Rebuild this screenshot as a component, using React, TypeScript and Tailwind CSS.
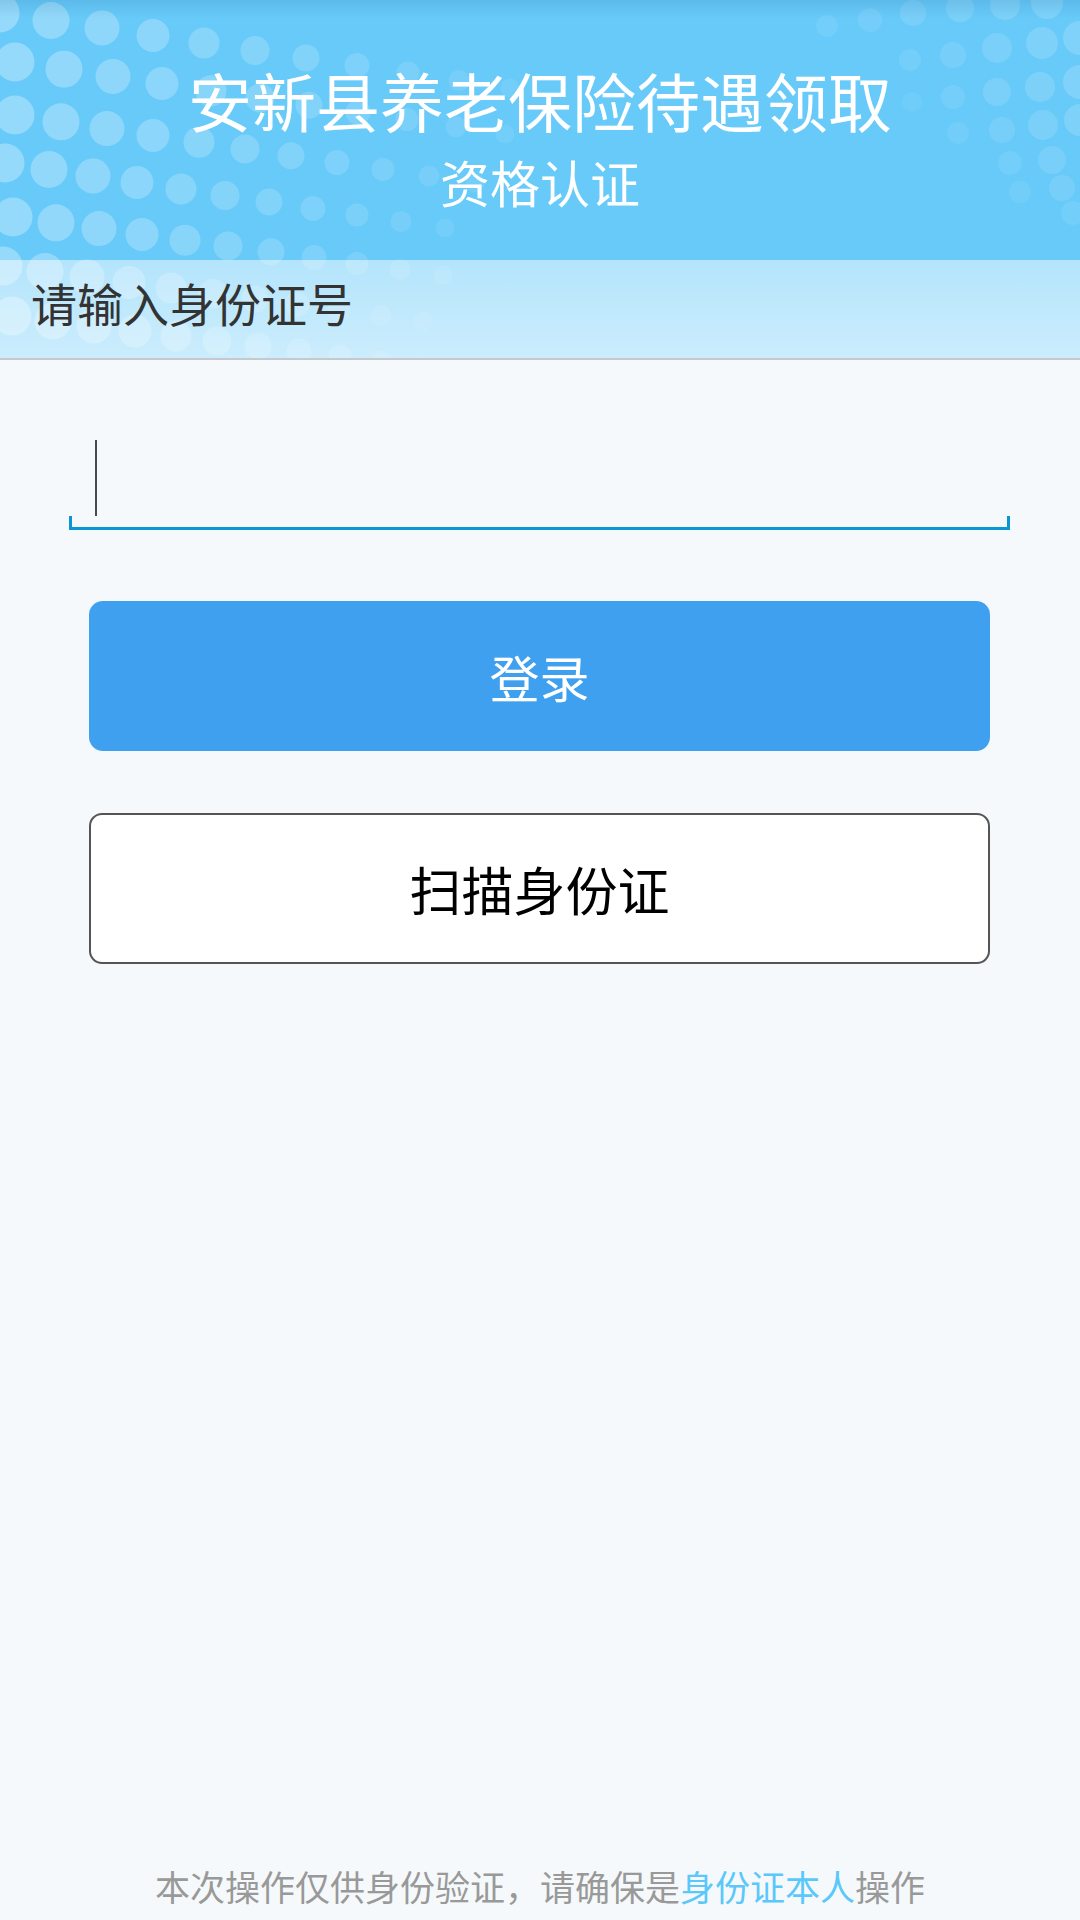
import React from "react";

type Dot = [number, number, number, number];

// left halftone field, generated row by row
const leftDots: Dot[] = (() => {
  const out: Dot[] = [];
  const rows = [
    { y: 13, x0: 0, step: 51, slope: 7.5 },
    { y: 62, x0: 15, step: 49, slope: 7.2 },
    { y: 115, x0: 15, step: 46, slope: 6.8 },
    { y: 163, x0: 5, step: 44, slope: 6.5 },
    { y: 217, x0: 13, step: 43, slope: 5.8 },
    { y: 266, x0: 3, step: 42, slope: 5.5 },
    { y: 316, x0: 12, step: 41, slope: 5 },
  ];
  rows.forEach((row) => {
    for (let c = 0; c < 11; c++) {
      const r = 19.5 - c * 1.0;
      const o = 0.3 - c * 0.022;
      if (o <= 0.04) continue;
      out.push([row.x0 + c * row.step, row.y + c * row.slope, r, o]);
    }
  });
  return out;
})();

// right halftone field, traced from the screenshot
const rightDots: Dot[] = [
  [827, 26, 11, 0.08], [870, 20, 12, 0.09], [913, 13, 13, 0.11], [960, 8, 14, 0.12], [1005, 5, 15, 0.14], [1047, 3, 16, 0.15],
  [910, 60, 11, 0.08], [953, 55, 13, 0.1], [997, 48, 15, 0.13], [1042, 43, 16, 0.15], [1080, 38, 17, 0.16],
  [912, 102, 10, 0.06], [953, 97, 12, 0.09], [997, 92, 14, 0.12], [1040, 87, 15, 0.14], [1080, 82, 17, 0.16],
  [958, 133, 11, 0.07], [1002, 130, 13, 0.1], [1043, 125, 15, 0.13], [1080, 120, 16, 0.15],
  [1010, 163, 12, 0.08], [1052, 160, 14, 0.11],
  [1020, 192, 11, 0.07], [1062, 188, 13, 0.1],
  [1073, 213, 12, 0.08],
];

const Halftone = () => (
  <svg
    className="absolute inset-0 w-full h-full"
    viewBox="0 0 1080 360"
    preserveAspectRatio="none"
  >
    {[...leftDots, ...rightDots].map(([cx, cy, r, o], i) => (
      <circle key={i} cx={cx} cy={cy} r={r} fill="#ffffff" fillOpacity={o} />
    ))}
  </svg>
);

export default function App() {
  return (
    <div className="h-[1920px] flex flex-col bg-[#f5f9fb] font-['Noto_Sans_CJK_SC','Noto_Sans',sans-serif]">
      {/* Header with title and section label */}
      <div className="relative bg-[#68caf9]">
        <Halftone />
        <div className="absolute top-0 left-0 right-0 h-[18px] bg-linear-to-b from-[rgba(20,90,140,0.14)] to-transparent" />
        <div className="relative h-[260px] flex flex-col items-center pt-[67px] text-white">
          <h1 className="text-[64px] leading-none font-normal">安新县养老保险待遇领取</h1>
          <h2 className="mt-[25px] text-[50px] leading-none font-normal">资格认证</h2>
        </div>
        <div className="relative h-[100px] pt-[19px] pl-[31px] bg-linear-to-b from-[rgba(255,255,255,0.5)] to-[rgba(255,255,255,0.66)] border-b-2 border-[#c5c9cd]">
          <span className="text-[46px] leading-none text-[#333333]">请输入身份证号</span>
        </div>
      </div>

      {/* Form */}
      <div className="flex flex-col">
        <div className="mt-[80px] ml-[69px] w-[941px] flex flex-col">
          <div className="h-[76px] pl-[26px]">
            <div className="w-[2px] h-full bg-[#4a4a4a]" />
          </div>
          <div className="h-[14px] border-x-[3px] border-b-[3px] border-[#0a96d2]" />
        </div>

        <button className="mt-[71px] ml-[89px] w-[901px] h-[150px] rounded-[14px] bg-[#3ea0ee] text-white text-[50px] leading-none flex items-center justify-center">
          登录
        </button>

        <button className="mt-[62px] ml-[89px] w-[901px] h-[151px] rounded-[13px] bg-white border-2 border-[#555555] text-black text-[52px] leading-none flex items-center justify-center">
          扫描身份证
        </button>
      </div>

      {/* Footer notice */}
      <div className="mt-auto pb-[17px] text-center text-[35px] leading-none text-[#999999]">
        本次操作仅供身份验证，请确保是<span className="text-[#5ac8fa]">身份证本人</span>操作
      </div>
    </div>
  );
}
